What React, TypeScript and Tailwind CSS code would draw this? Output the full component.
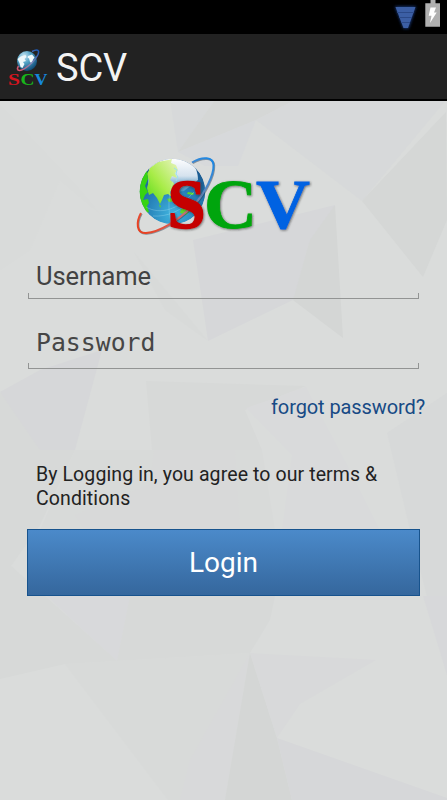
import React from 'react';

type Facet = { points: string; fill: string };

const FACETS: Facet[] = [
  { points: '170,100 215,100 178,152', fill: '#d7d9da' },
  { points: '215,100 295,100 256,120 178,152', fill: '#d5d7d6' },
  { points: '295,100 446,100 362,201 256,120', fill: '#d7d9da' },
  { points: '178,152 256,120 238,166 205,166', fill: '#d7d9db' },
  { points: '446,112 447,220 423,277 362,201', fill: '#d5d7d6' },
  { points: '0,105 80,190 100,214 60,180 30,250 0,270', fill: '#d9dbda' },
  { points: '193,240 335,205 293,300 208,341', fill: '#d6d7d9' },
  { points: '335,205 343,338 293,300 310,240', fill: '#d4d6d5' },
  { points: '134,252 208,341 165,310', fill: '#d8dad9' },
  { points: '0,392 40,370 102,350 75,450 30,450', fill: '#d6d7d9' },
  { points: '146,381 306,386 245,410 262,450 152,450', fill: '#d7d9d8' },
  { points: '0,392 40,450 75,450 40,525 11,566 45,596 117,661 65,664 0,679', fill: '#d7d9d8' },
  { points: '306,387 355,480 380,530 282,530 292,455 246,408', fill: '#d9dadb' },
  { points: '387,433 447,393 447,675 410,530', fill: '#d7d9d9' },
  { points: '75,450 262,450 275,530 40,530', fill: '#d8dad9' },
  { points: '75,515 150,484 154,450 235,450 240,530 85,530', fill: '#d8d9d9' },
  { points: '47,596 130,596 117,661', fill: '#d8d9db' },
  { points: '130,596 275,596 270,620 250,653 117,661', fill: '#d7d9d8' },
  { points: '65,664 250,653 225,800 168,800', fill: '#d8dad9' },
  { points: '190,760 250,653 225,800 180,800', fill: '#d8d9da' },
  { points: '250,653 277,738 292,800 225,800', fill: '#d4d6d5' },
  { points: '250,653 376,660 300,704 277,738', fill: '#d8d9da' },
  { points: '277,738 447,798 447,800 292,800', fill: '#d6d7d9' },
  { points: '423,596 447,596 447,675', fill: '#d7d8da' },
];

const Backdrop = () => (
  <svg className="absolute inset-0 -z-10 h-full w-full" viewBox="0 101 447 699" preserveAspectRatio="none">
    <rect y="100" width="447" height="700" fill="#dadcdb" />
    {FACETS.map((facet) => (
      <polygon key={facet.points} points={facet.points} fill={facet.fill} />
    ))}
  </svg>
);

const WifiIcon = () => (
  <svg className="h-[34px] w-7" viewBox="0 0 28 34">
    <defs>
      <filter id="wifiGlow" x="-40%" y="-40%" width="180%" height="180%">
        <feGaussianBlur stdDeviation="1.8" />
      </filter>
    </defs>
    <path d="M4 6.500h21l-7.500 22h-5z" fill="#1b3d83" filter="url(#wifiGlow)" />
    <path d="M4.500 7h20l-7.500 21h-4.500z" fill="#3c5fa5" />
    <path d="M6 12.500h17M8 17.500h13M10 22.500h9" stroke="#2b4988" strokeWidth="1" />
  </svg>
);

const BatteryIcon = () => (
  <svg className="h-[34px] w-4" viewBox="0 0 16 34">
    <path d="M5.500 0h5v3.300h4.500v23.500H.300V3.300h5.200z" fill="#b0b0b0" />
    <path d="M5.500 7.500h5.500l-2 5h2.700L5 23l1.500-7.300H3.700z" fill="#fff" />
  </svg>
);

const AppIcon = () => (
  <svg className="h-11 w-10 overflow-visible" viewBox="8 47 40 44">
    <defs>
      <radialGradient id="miniGlobe" cx="35%" cy="25%" r="80%">
        <stop offset="0" stopColor="#c8e6f2" />
        <stop offset=".45" stopColor="#4f9fc4" />
        <stop offset="1" stopColor="#0b4470" />
      </radialGradient>
      <linearGradient id="miniRing" x1="0" y1="1" x2="1" y2="0">
        <stop offset="0" stopColor="#d9516a" />
        <stop offset=".5" stopColor="#8a86b5" />
        <stop offset="1" stopColor="#1556b5" />
      </linearGradient>
    </defs>
    <circle cx="27" cy="62" r="10" fill="url(#miniGlobe)" />
    <path d="M17.500 60l3-2.500 5-1.500 1 2-2 2 1.500 2-3 1 1.500 2-2 4-2-1-1-4zM28 57l4-1.500 2.500 3-1.500 2-1 4-2-1.500-1-3.500-1.500-1z" fill="#eef8fb" />
    <path d="M32 52.500C37 50 40 50.500 38 55.500C35 62 25 71 19.500 71.500C17 71.500 17 69.500 18.500 67" fill="none" stroke="url(#miniRing)" strokeWidth="1.500" />
    <g fontFamily="'Liberation Serif', serif" fontWeight="700" fontSize="17.500">
      <text x="8" y="85.700" textLength="12" lengthAdjust="spacingAndGlyphs" fill="#d5151f">S</text>
      <text x="20.500" y="85.700" textLength="14" lengthAdjust="spacingAndGlyphs" fill="#18b51b">C</text>
      <text x="34.500" y="85.700" textLength="13" lengthAdjust="spacingAndGlyphs" fill="#1687dc">V</text>
    </g>
  </svg>
);

const Logo = () => (
  <svg className="h-[100px] w-[184px] overflow-visible" viewBox="132 152 184 100">
    <defs>
      <radialGradient id="ocean" cx="50%" cy="85%" r="85%">
        <stop offset="0" stopColor="#40b4df" />
        <stop offset=".5" stopColor="#257db5" />
        <stop offset="1" stopColor="#184f85" />
      </radialGradient>
      <linearGradient id="land" x1="0" y1=".9" x2=".8" y2="0">
        <stop offset="0" stopColor="#5fdc1c" />
        <stop offset=".45" stopColor="#a8ec48" />
        <stop offset="1" stopColor="#dff2ae" />
      </linearGradient>
      <linearGradient id="shine" x1="0" y1="0" x2="0" y2="1">
        <stop offset="0" stopColor="#fff" />
        <stop offset=".5" stopColor="#d5e2ee" />
        <stop offset="1" stopColor="#55a5d0" stopOpacity=".4" />
      </linearGradient>
      <linearGradient id="ring" x1="0" y1="1" x2="1" y2="0">
        <stop offset="0" stopColor="#ed3c18" />
        <stop offset=".4" stopColor="#d46a68" />
        <stop offset=".65" stopColor="#6887b8" />
        <stop offset="1" stopColor="#1688e8" />
      </linearGradient>
      <clipPath id="globeClip">
        <circle cx="172.500" cy="191.500" r="32.800" />
      </clipPath>
      <filter id="logoShadow" x="-10%" y="-10%" width="125%" height="130%">
        <feDropShadow dx=".8" dy=".8" stdDeviation=".8" floodColor="#222" floodOpacity=".6" />
      </filter>
    </defs>
    <g clipPath="url(#globeClip)">
      <circle cx="172.500" cy="191.500" r="33" fill="url(#ocean)" />
      <path d="M150 158h36c9 5 12 14 12 22l-14 11-20 3-16-10z" fill="url(#shine)" />
      <path d="M147 174L150 168L158 162L168 160L172 159L171 163L176 165L178 170L175 173L177 178L172 176L170 180L174 183L173 188L170 192L172 197L168 194L164 195L162 200L160 204L157 198L153 193L149 195L147 188L149 181z" fill="url(#land)" />
      <path d="M138 190C138 181 142 174 147 170L148 179L145 186L148 192L145 195L143 200L148 199L149 203L147 206L149 212L146 213L139 202z" fill="#37d312" />
      <path d="M159 204l2 2-1 2zM167 199l8-2 8 3 4 3-4 1-6-3-8 1zM181 209l5-1 4 3-4 4-6-2zM188 192l6 1-1 2-6-1z" fill="#5bd52b" />
      <path d="M174 168l3 2-1 4 2 3-2 4" fill="none" stroke="#9adff0" strokeWidth="1" />
      <path d="M146 207c14 8 32 3 48-15M153 216c14 1 27-5 36-14M171 224c-3-15-3-29 2-43" fill="none" stroke="#bdf0ff" strokeOpacity=".35" strokeWidth=".8" />
    </g>
    <path d="M192 162.500C203 156 213 157 213.500 165C214 175 205 193 194 205C176 222 159 232 146 233C136 233.500 136 222 141 213" fill="none" stroke="#26384c" strokeOpacity=".45" strokeWidth="2" transform="translate(.7 .7)" />
    <path d="M192 162.500C203 156 213 157 213.500 165C214 175 205 193 194 205C176 222 159 232 146 233C136 233.500 136 222 141 213" fill="none" stroke="url(#ring)" strokeWidth="2" />
    <g fontFamily="'Liberation Serif', serif" fontWeight="700" fontSize="69.500" filter="url(#logoShadow)">
      <text x="167.500" y="227.500" textLength="38" lengthAdjust="spacingAndGlyphs" fill="#c50303" stroke="#c50303" strokeWidth="1.400">S</text>
      <text x="204" y="227.500" textLength="53" lengthAdjust="spacingAndGlyphs" fill="#03a50a" stroke="#03a50a" strokeWidth=".8">C</text>
      <text x="256" y="227.500" textLength="54" lengthAdjust="spacingAndGlyphs" fill="#0462e2" stroke="#0462e2" strokeWidth=".8">V</text>
    </g>
  </svg>
);

const FieldLine = () => (
  <div className="mx-7 h-[6px] border-x border-b border-[#929493]" />
);

export default function App() {
  return (
    <div className="flex h-[800px] w-[447px] flex-col overflow-hidden font-['Roboto',sans-serif]">
      <div className="flex h-[34px] shrink-0 items-start justify-end bg-black pr-[6px]">
        <div className="mr-[6px]">
          <WifiIcon />
        </div>
        <BatteryIcon />
      </div>

      <header className="flex h-[67px] shrink-0 items-center border-b-2 border-black bg-[#222] pt-[2px] pl-2">
        <AppIcon />
        <h1 className="ml-2 text-[38px] leading-[46px] font-normal tracking-[-0.1px] text-[#f3f3f3]">SCV</h1>
      </header>

      <main className="relative isolate flex flex-1 flex-col">
        <Backdrop />
        <div className="mt-[51px] ml-[132px] h-[100px]">
          <Logo />
        </div>

        <div className="flex h-[41px] items-end pb-px pl-9 text-[25.500px] leading-[32px] tracking-[-0.1px] text-[#424242]">
          Username
        </div>
        <FieldLine />
        <div className="flex h-[64px] items-end pb-[4px] pl-9 font-['DejaVu_Sans_Mono',monospace] text-[24.800px] leading-[32px] text-[#464646]">
          Password
        </div>
        <FieldLine />

        <a className="mt-[26px] mr-[22px] self-end text-[20px] leading-6 tracking-[-0.1px] text-[#174a85]">forgot password?</a>
        <p className="mt-[44px] ml-9 w-[360px] text-[19.500px] leading-6 tracking-[0.1px] text-[#222]">
          By Logging in, you agree to our terms &amp; Conditions
        </p>
        <button className="mx-[27px] mt-[18px] h-[67px] border border-[#17538d] bg-gradient-to-b from-[#4b8aca] to-[#35679d] text-[28px] text-white">
          Login
        </button>
      </main>
    </div>
  );
}
